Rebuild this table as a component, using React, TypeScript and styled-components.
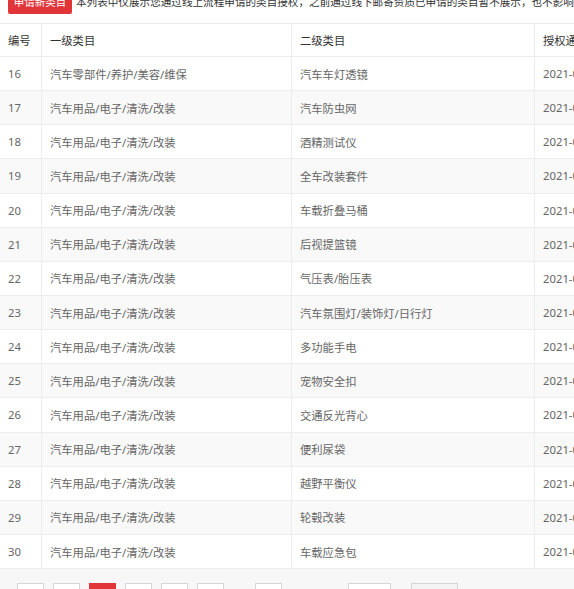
import React from "react";
import styled, { createGlobalStyle } from "styled-components";

const Global = createGlobalStyle`
  html, body { margin: 0; padding: 0; background: #fff; overflow: hidden; }
  body { font-family: "Noto Sans", "Noto Sans CJK SC", sans-serif; }
`;

const Page = styled.div`
  width: 574px;
  height: 589px;
  overflow: hidden;
  background: #fff;
`;

const TopBar = styled.div`
  display: flex;
  align-items: center;
  gap: 4px;
  margin-top: -11px;
  padding-left: 8px;
  height: 25px;
  white-space: nowrap;
`;

const ApplyButton = styled.button`
  flex: none;
  width: 64px;
  height: 25px;
  border: none;
  border-radius: 2px;
  background: #e2353a;
  color: #fff;
  font-family: inherit;
  font-size: 10.5px;
  padding: 0;
`;

const Notice = styled.span`
  font-size: 10.6px;
  color: #333;
`;

const Table = styled.div`
  margin-top: 9px;
  width: 800px;
  border-top: 1px solid #ececec;
`;

const Row = styled.div<{ $striped?: boolean; $head?: boolean }>`
  display: grid;
  grid-template-columns: 42px 250px 243px 1fr;
  height: ${(p) => (p.$head ? "33px" : "34.15px")};
  background: ${(p) => (p.$striped ? "#f9f9f9" : "#fff")};
  border-bottom: 1px solid #ededed;
  box-sizing: border-box;
`;

const Cell = styled.div<{ $head?: boolean }>`
  display: flex;
  align-items: center;
  padding-left: 8px;
  border-right: 1px solid #ececec;
  font-size: 11.3px;
  color: ${(p) => (p.$head ? "#333" : "#666")};
  white-space: nowrap;
  overflow: hidden;
`;

const Footer = styled.div`
  background: #f7f7f7;
  height: 40px;
  display: flex;
  align-items: flex-start;
  padding: 14px 0 0 17px;
  gap: 9px;
`;

const PageBox = styled.div<{ $active?: boolean }>`
  flex: none;
  width: 27px;
  height: 26px;
  box-sizing: border-box;
  border: 1px solid ${(p) => (p.$active ? "#e2353a" : "#d6d6d6")};
  background: ${(p) => (p.$active ? "#e2353a" : "#fff")};
`;

const Ellipsis = styled.div`
  width: 13px;
`;

const Jump = styled.div`
  display: flex;
  align-items: flex-start;
  gap: 4px;
`;

const PagerText = styled.span`
  font-size: 11px;
  color: #666;
  line-height: 26px;
  white-space: nowrap;
`;

const PageInput = styled.div`
  flex: none;
  width: 43px;
  height: 26px;
  box-sizing: border-box;
  border: 1px solid #d6d6d6;
  background: #fff;
`;

const GoButton = styled.div`
  flex: none;
  width: 47px;
  height: 26px;
  margin-left: 1px;
  box-sizing: border-box;
  border: 1px solid #d6d6d6;
  background: #f4f4f4;
`;

const rows: [number, string, string, string][] = [
  [16, "汽车零部件/养护/美容/维保", "汽车车灯透镜", "2021-03-16 10:21:35"],
  [17, "汽车用品/电子/清洗/改装", "汽车防虫网", "2021-03-16 10:21:35"],
  [18, "汽车用品/电子/清洗/改装", "酒精测试仪", "2021-03-16 10:21:35"],
  [19, "汽车用品/电子/清洗/改装", "全车改装套件", "2021-03-16 10:21:35"],
  [20, "汽车用品/电子/清洗/改装", "车载折叠马桶", "2021-03-16 10:21:35"],
  [21, "汽车用品/电子/清洗/改装", "后视提篮镜", "2021-03-16 10:21:35"],
  [22, "汽车用品/电子/清洗/改装", "气压表/胎压表", "2021-03-16 10:21:35"],
  [23, "汽车用品/电子/清洗/改装", "汽车氛围灯/装饰灯/日行灯", "2021-03-16 10:21:35"],
  [24, "汽车用品/电子/清洗/改装", "多功能手电", "2021-03-16 10:21:35"],
  [25, "汽车用品/电子/清洗/改装", "宠物安全扣", "2021-03-16 10:21:35"],
  [26, "汽车用品/电子/清洗/改装", "交通反光背心", "2021-03-16 10:21:35"],
  [27, "汽车用品/电子/清洗/改装", "便利尿袋", "2021-03-16 10:21:35"],
  [28, "汽车用品/电子/清洗/改装", "越野平衡仪", "2021-03-16 10:21:35"],
  [29, "汽车用品/电子/清洗/改装", "轮毂改装", "2021-03-16 10:21:35"],
  [30, "汽车用品/电子/清洗/改装", "车载应急包", "2021-03-16 10:21:35"],
];

export default function App() {
  return (
    <Page>
      <Global />
      <TopBar>
        <ApplyButton>申请新类目</ApplyButton>
        <Notice>
          本列表中仅展示您通过线上流程申请的类目授权，之前通过线下邮寄资质已申请的类目暂不展示，也不影响您的正常经营
        </Notice>
      </TopBar>
      <Table>
        <Row $head>
          <Cell $head>编号</Cell>
          <Cell $head>一级类目</Cell>
          <Cell $head>二级类目</Cell>
          <Cell $head>授权通过时间</Cell>
        </Row>
        {rows.map(([n, a, b, t], i) => (
          <Row key={n} $striped={i % 2 === 1}>
            <Cell>{n}</Cell>
            <Cell>{a}</Cell>
            <Cell>{b}</Cell>
            <Cell>{t}</Cell>
          </Row>
        ))}
      </Table>
      <Footer>
        <PageBox />
        <PageBox />
        <PageBox $active />
        <PageBox />
        <PageBox />
        <PageBox />
        <Ellipsis />
        <PageBox />
        <Jump>
          <PagerText>共4页 到第</PagerText>
          <PageInput />
          <PagerText>页</PagerText>
          <GoButton />
        </Jump>
      </Footer>
    </Page>
  );
}
